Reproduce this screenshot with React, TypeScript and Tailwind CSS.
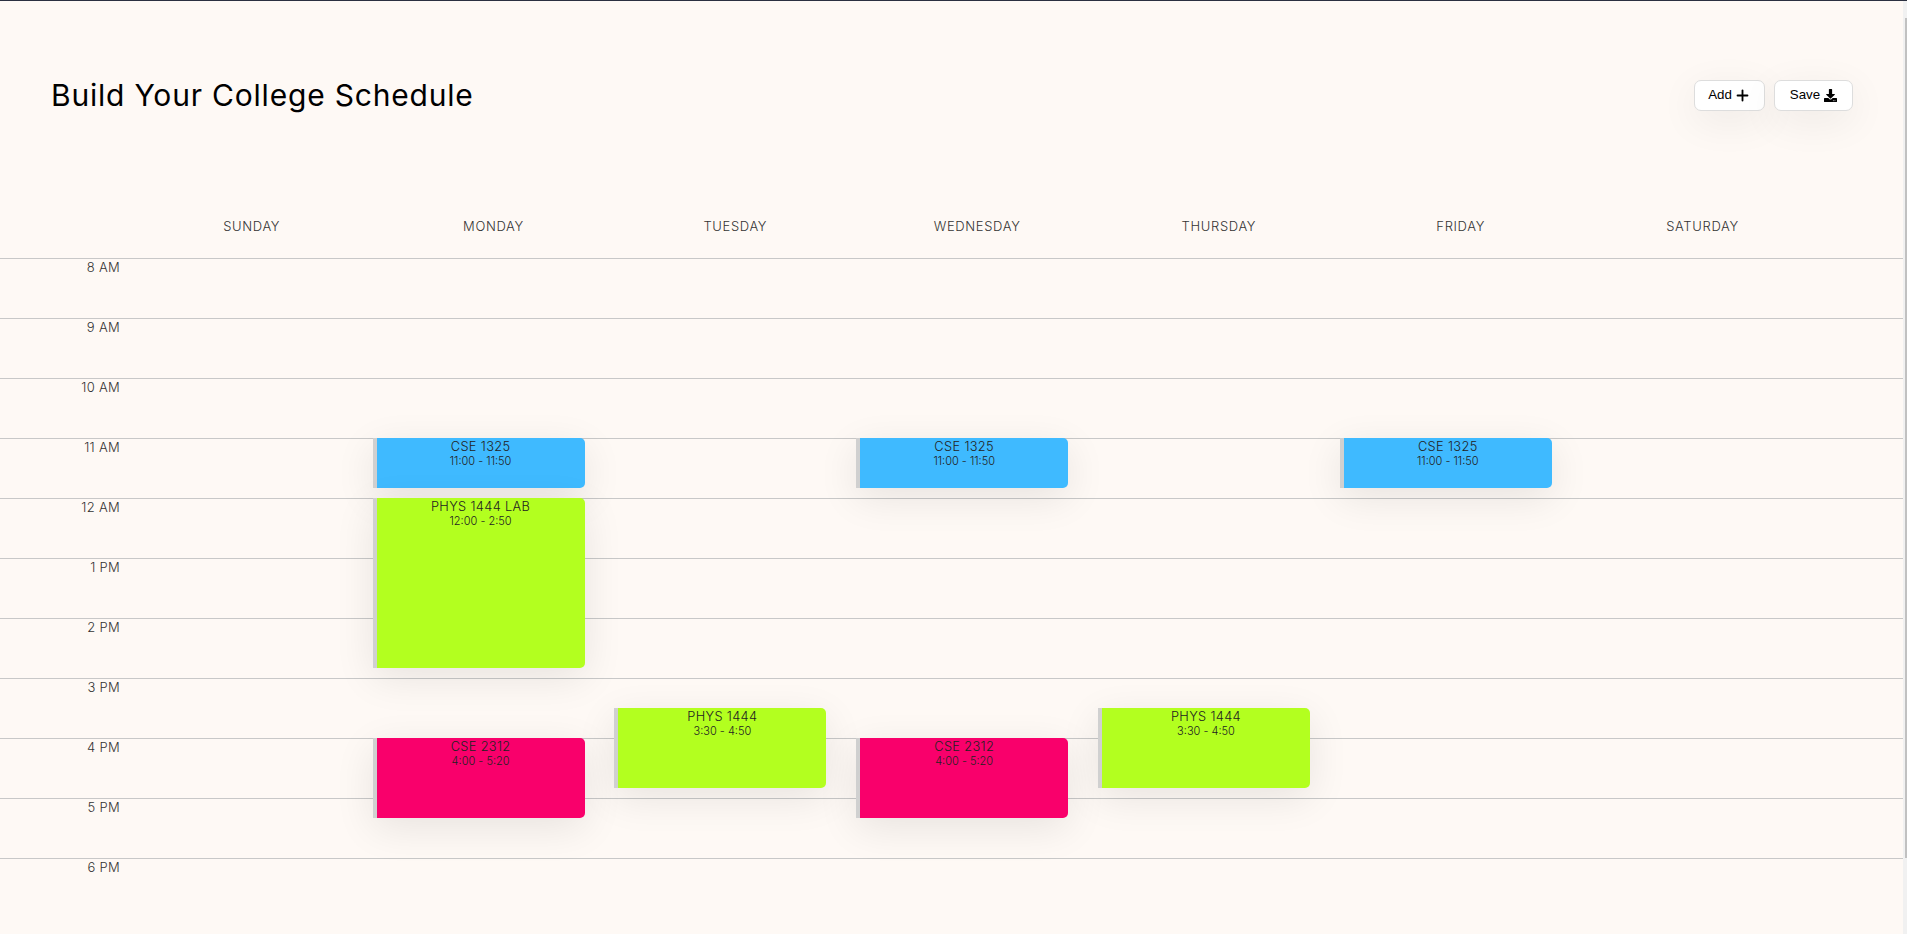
import { FaDownload } from 'react-icons/fa';
import { Plus } from 'lucide-react';

const days = ['SUNDAY', 'MONDAY', 'TUESDAY', 'WEDNESDAY', 'THURSDAY', 'FRIDAY', 'SATURDAY'];
const hours = ['8 AM', '9 AM', '10 AM', '11 AM', '12 AM', '1 PM', '2 PM', '3 PM', '4 PM', '5 PM', '6 PM'];

// every grid row of the overlay is 10 minutes
const events = [
  { name: 'CSE 1325', time: '11:00 - 11:50', place: 'col-start-3 row-[19/span_5]', color: 'bg-[#3fbaff]' },
  { name: 'CSE 1325', time: '11:00 - 11:50', place: 'col-start-5 row-[19/span_5]', color: 'bg-[#3fbaff]' },
  { name: 'CSE 1325', time: '11:00 - 11:50', place: 'col-start-7 row-[19/span_5]', color: 'bg-[#3fbaff]' },
  { name: 'PHYS 1444 LAB', time: '12:00 - 2:50', place: 'col-start-3 row-[25/span_17]', color: 'bg-[#b3ff1f]' },
  { name: 'CSE 2312', time: '4:00 - 5:20', place: 'col-start-3 row-[49/span_8]', color: 'bg-[#f9006b]' },
  { name: 'CSE 2312', time: '4:00 - 5:20', place: 'col-start-5 row-[49/span_8]', color: 'bg-[#f9006b]' },
  { name: 'PHYS 1444', time: '3:30 - 4:50', place: 'col-start-4 row-[46/span_8]', color: 'bg-[#b3ff1f]' },
  { name: 'PHYS 1444', time: '3:30 - 4:50', place: 'col-start-6 row-[46/span_8]', color: 'bg-[#b3ff1f]' },
];

const App = () => {
  return (
    <div className="h-[934px] overflow-hidden bg-[#fef9f5] font-['Inter',sans-serif] flex flex-col">
      <div className="h-px bg-[#2b3040]" />
      <div className="flex-1 flex flex-row">
        <div className="flex-1 min-w-0 flex flex-col">
          {/* 헤더 */}
          <div className="h-[189px] pl-[51px] pr-[50px] pb-px flex flex-row justify-between items-center">
            <h1 className="text-[30px] tracking-[0.8px] text-black">Build Your College Schedule</h1>
            <div className="flex flex-row gap-[9px]">
              <button className="w-[71px] h-[31px] bg-white border border-[#dddddd] rounded-[7px] shadow-[0_10px_40px_rgba(0,0,0,0.07)] flex justify-center items-center gap-[2px] font-['Liberation_Sans',sans-serif] text-[13.33px] text-black">
                Add
                <Plus size={17} strokeWidth={2.6} />
              </button>
              <button className="w-[79px] h-[31px] bg-white border border-[#dddddd] rounded-[7px] shadow-[0_10px_40px_rgba(0,0,0,0.07)] flex justify-center items-center gap-[4px] font-['Liberation_Sans',sans-serif] text-[13.33px] text-black">
                Save
                <FaDownload size={13} />
              </button>
            </div>
          </div>
          {/* 요일 */}
          <div className="h-[68px] pt-[5px] grid grid-cols-[130.8px_repeat(7,241.8px)] items-center">
            <div />
            {days.map((day) => (
              <div key={day} className="text-center text-[13px] font-light tracking-[0.65px] text-[#333333]">
                {day}
              </div>
            ))}
          </div>
          {/* 시간표 */}
          <div className="relative">
            {hours.map((hour) => (
              <div key={hour} className="h-[60px] border-t border-[#c8c8c8]">
                <div className="w-[120px] -mt-px text-right text-[13px] font-light tracking-[0.3px] text-[#333333]">
                  {hour}
                </div>
              </div>
            ))}
            <div className="absolute inset-0 grid grid-cols-[130.8px_repeat(7,241.8px)] grid-rows-[repeat(66,10px)]">
              {events.map((event) => (
                <div
                  key={event.place}
                  className={`${event.place} ${event.color} w-[212px] pt-px border-l-4 border-[#d0d0d0] rounded-r-[5px] shadow-[0_10px_40px_rgba(0,0,0,0.09)] text-center text-[#222222] font-light`}
                >
                  <div className="text-[12.8px] leading-[16px] tracking-[0.35px]">{event.name}</div>
                  <div className="text-[11px] leading-[13px]">{event.time}</div>
                </div>
              ))}
            </div>
          </div>
        </div>
        {/* 스크롤바 */}
        <div className="w-1 bg-[#f1f1f1] flex flex-row justify-end items-start pt-[17px]">
          <div className="w-0.5 h-[840px] bg-[#c1c1c1]" />
        </div>
      </div>
    </div>
  );
};

export default App;
